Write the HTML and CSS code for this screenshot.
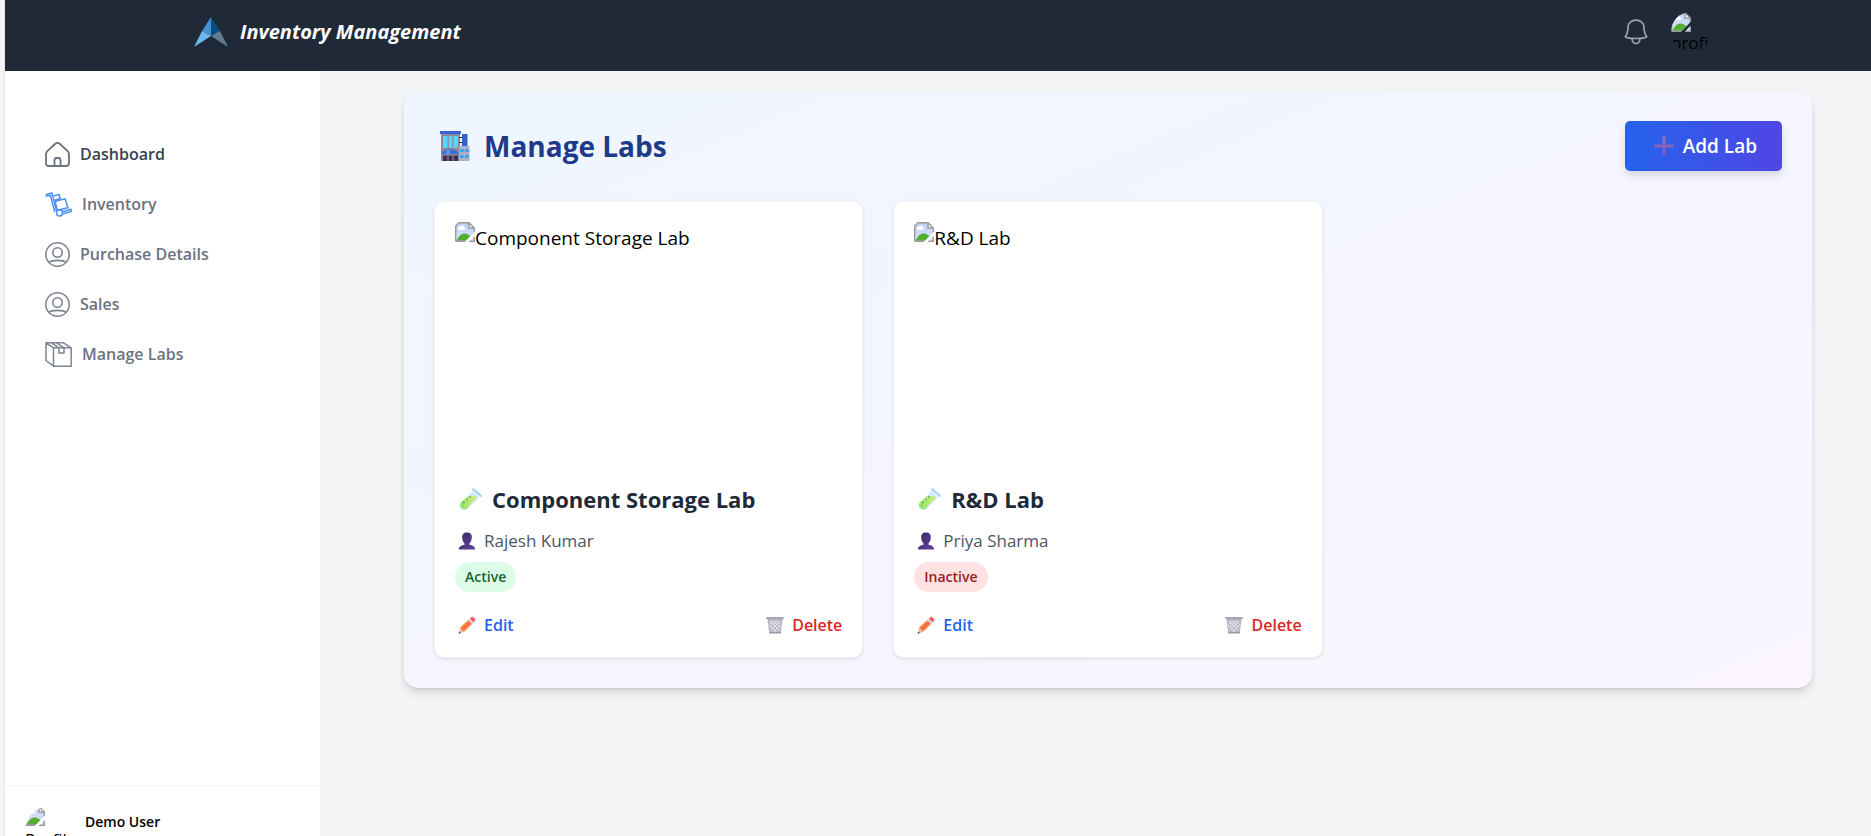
FILE: index.html
```html
<!DOCTYPE html>
<html lang="en">
<head>
<meta charset="utf-8">
<meta name="viewport" content="width=device-width, initial-scale=1">
<title>Inventory Management</title>
<link rel="stylesheet" href="styles.css">
</head>
<body>
<svg class="sprite" aria-hidden="true">
  <defs>
    <linearGradient id="sky" x1="0" y1="0" x2="0" y2="1"><stop offset="0" stop-color="#bdd0f6"/><stop offset="1" stop-color="#dce6fb"/></linearGradient>
    <linearGradient id="liquid" x1="0" y1="1" x2="1" y2="0"><stop offset="0" stop-color="#8fe36b"/><stop offset="1" stop-color="#d3f071"/></linearGradient>
    <linearGradient id="bust" x1="0" y1="0" x2="1" y2="1"><stop offset="0" stop-color="#3c2a63"/><stop offset="1" stop-color="#61419b"/></linearGradient>
    <linearGradient id="cross" x1="0" y1="0" x2="0" y2="1"><stop offset="0" stop-color="#8d7cae"/><stop offset="1" stop-color="#8a4bc0"/></linearGradient>
    <symbol id="broken" viewBox="0 0 20 20">
      <path d="M.7 4L4 .7h10L19.300 6v13.300H.7z" fill="url(#sky)"/>
      <path d="M3.500 8a2 2 0 0 1 1.500-3.500 2.500 2.500 0 0 1 4.500 1A1.500 1.500 0 0 1 9.500 8z" fill="#fff"/>
      <path d="M1.500 18.800C4 13 8 10.500 12 12l3.500 2-4.500 4.800z" fill="#56ad32"/>
      <path d="M14 1v5h5z" fill="#fff"/>
      <path d="M.7 19.300V4L4 .7h10L19.300 6v5M14 .7V6h5.300M.7 19.300H10M14 19.300h5.300V15" fill="none" stroke="#9a9a9a" stroke-width="1.400"/>
      <path d="M20 9.500V13l-6.500 7H10z" class="gap"/>
    </symbol>
    <symbol id="tube" viewBox="0 0 24 24">
      <path d="M14 3.500l7 6.500L9 21.500a4.700 4.700 0 0 1-7-6.500z" fill="#cfe8fb"/>
      <path d="M9.500 8.500h9.500L8.500 21.200a4.600 4.600 0 0 1-6.500-6.400z" fill="url(#liquid)"/>
      <path d="M15 1.500l7.500 6.500" stroke="#a9d5f7" stroke-width="2.600" stroke-linecap="round"/>
      <g fill="#2e9b55"><circle cx="5" cy="15" r=".9"/><circle cx="8.500" cy="12.500" r=".8"/><circle cx="11.500" cy="9.500" r=".9"/><circle cx="4" cy="18" r=".6"/></g>
    </symbol>
    <symbol id="person" viewBox="0 0 18 18">
      <path d="M9 .5c3.500 0 5 2 4.800 5.300C13.500 9.500 12 11 11.500 11.500v1.200c3 .6 5.500 1.800 5.700 4.800H.8c.2-3 2.700-4.200 5.700-4.800v-1.200C6 11 4.500 9.500 4.200 5.800 4 2.500 5.500.5 9 .5z" fill="url(#bust)"/>
    </symbol>
    <symbol id="pencil" viewBox="0 0 18 18">
      <path d="M2 11.500L11.500 3l3.800 3.800L6 16z" fill="#ff8548"/>
      <path d="M3.500 13L13 4.700l1 1L4.500 14.500z" fill="#f2643d"/>
      <path d="M2 11.500L6 16l-5 1.700z" fill="#e9b99a"/><path d="M1.300 15.500L2.800 17l-2.300.8z" fill="#443058"/>
      <path d="M10 4.300l2-1.800L16 6.300l-2 1.900z" fill="#d9cce4"/>
      <path d="M12 2.500L13.500 1c1-.8 4.300 2 3.500 3.600l-1.200 1.700z" fill="#f95a57"/>
    </symbol>
    <symbol id="bin" viewBox="0 0 18 18">
      <path d="M1.500 3h15L14.800 17H3.200z" fill="#b7b2c2"/>
      <path d="M4 5l10 10M7 4.500l7 7M11 4.500l3.500 4M3.500 9l7 7M14 5L4 15M11 4.500l-7 7M7 4.500L3.500 8.500M14.500 9l-7 7" stroke="#f4f2f8" stroke-width=".9"/>
      <path d="M.3 1h17.400v2.300H.3z" fill="#aaa5b2"/><path d="M3 16h12v1.500H3z" fill="#9b96a6"/>
    </symbol>
    <symbol id="user" viewBox="0 0 25 25">
      <g fill="none" stroke="#7d8594" stroke-width="1.600"><circle cx="12.500" cy="12.500" r="11.700"/><circle cx="12.500" cy="10.500" r="4.700"/><path d="M4 20.500c2.500-2.800 14.500-2.800 17 0"/></g>
    </symbol>
  </defs>
</svg>

<div class="app">
  <header class="topbar">
    <a class="brand" href="#">
      <svg class="brand-mark" viewBox="0 0 34 30" aria-hidden="true"><path d="M17 0v19L8 14z" fill="#4791d2"/><path d="M17 0v19l9-5z" fill="#064f86"/><path d="M8 14l9 5L0 30z" fill="#6cb8ea"/><path d="M26 14l-9 5 17 11z" fill="#627d90"/></svg>
      <span>Inventory Management</span>
    </a>
    <div class="tools">
      <button class="bell" type="button" aria-label="Notifications">
        <svg viewBox="0 0 24 26" fill="none" stroke="#9ca3af" stroke-width="1.700" stroke-linejoin="round"><path d="M12 1.200c-4.500 0-8 3-8 7.300 0 5-1 7-2.800 9.200C3 19 7 19.500 12 19.500s9-.5 10.800-1.800C21 15.500 20 13.500 20 8.500c0-4.300-3.500-7.300-8-7.300z"/><path d="M8 19.500c.2 3 1.800 5 4 5s3.800-2 4-5"/></svg>
      </button>
      <a class="avatar avatar-dark" href="#"><svg class="broken"><use href="#broken"/></svg><span>profile</span></a>
    </div>
  </header>

  <div class="body">
    <aside class="sidebar">
      <nav class="nav">
        <a class="current" href="#"><svg viewBox="0 0 25 25" fill="none" stroke="#6b7280" stroke-width="1.800" stroke-linejoin="round"><path d="M1 12.500c0-2 .3-2.500 1.300-3.400L10 2c1.600-1.500 3.400-1.500 5 0l7.700 7.100c1 .9 1.300 1.400 1.300 3.400V21c0 2.200-.8 3-3 3H4c-2.200 0-3-.8-3-3z"/><path d="M9.500 24v-5.500c0-1.500.6-2.500 2-2.500h2c1.400 0 2 1 2 2.500V24"/></svg>Dashboard</a>
        <a href="#"><svg class="wide" viewBox="0 0 27 25" fill="none" stroke="#4b92f5" stroke-width="1.500" stroke-linejoin="round"><path d="M1 2.500L7 1l4.500 18M1 2.500l.3 1.500L5.500 3.500 9.700 20"/><path d="M8.500 4l5.500-1.500 1.300 4-5.700 1.700"/><path d="M10 9.500l10-2.800 3 9-10.500 2.500z"/><circle cx="14.500" cy="21" r="3"/><path d="M17.300 19.700l8.700-2.500.5 2L17.500 22"/></svg>Inventory</a>
        <a href="#"><svg><use href="#user"/></svg>Purchase Details</a>
        <a href="#"><svg><use href="#user"/></svg>Sales</a>
        <a href="#"><svg class="wide" viewBox="0 0 27 25" fill="none" stroke="#7d8594" stroke-width="1.500" stroke-linejoin="round"><path d="M1 .8l7.500 5v18.400L1 18.500zM8.500 5.800h17.700v18.400H8.500zM1 .8h17.500l7.700 5M6.500.8l7.500 5M11.500.8l7.500 5M14 5.800V11h5V5.800"/></svg>Manage Labs</a>
      </nav>
      <div class="account">
        <span class="avatar"><svg class="broken"><use href="#broken"/></svg><span>Profile</span></span>
        <span class="account-name">Demo User</span>
      </div>
    </aside>

    <main class="main">
      <section class="panel">
        <div class="panel-head">
          <h1><svg viewBox="0 0 30 30" aria-hidden="true"><path d="M1 2h19v28H1z" fill="#8c889c"/><path d="M0 0h21v3H0z" fill="#3963d6"/><path d="M3 5h4.500v12H3zM8.800 5h3.400v12H8.800zM13.500 5H18v12h-4.500z" fill="#55d9fb"/><path d="M1.500 23c1-6 16-6 17.500 0z" fill="#3b6fdd"/><path d="M7 19l-1 4h4v-4.300z" fill="#6096ee"/><path d="M3 24.500h15V30H3z" fill="#40304f"/><path d="M8 24v6M13 24v6" stroke="#9a95aa"/><path d="M22 3h5.500v12H22z" fill="#3a60cf"/><path d="M19 6h3v1h-3zM19 11h3v1h-3z" fill="#333"/><path d="M19 15h10.500v15H19z" fill="#b2b0c7"/><path d="M20 18h3.700v3H20zM25 18h3.700v3H25zM20 24h3.700v3H20zM25 24h3.700v3H25z" fill="#37a5f6"/></svg>Manage Labs</h1>
          <button class="add" type="button"><svg viewBox="0 0 20 20" aria-hidden="true"><path d="M8.500.5h3v8h8v3h-8v8h-3v-8h-8v-3h8z" fill="url(#cross)"/></svg>Add Lab</button>
        </div>
        <div class="cards">
          <article class="card">
            <div class="photo"><svg class="broken"><use href="#broken"/></svg><span>Component Storage Lab</span></div>
            <h2><svg><use href="#tube"/></svg>Component Storage Lab</h2>
            <p class="owner"><svg><use href="#person"/></svg>Rajesh Kumar</p>
            <span class="badge active">Active</span>
            <div class="actions">
              <button class="edit" type="button"><svg><use href="#pencil"/></svg>Edit</button>
              <button class="delete" type="button"><svg><use href="#bin"/></svg>Delete</button>
            </div>
          </article>
          <article class="card">
            <div class="photo"><svg class="broken"><use href="#broken"/></svg><span>R&amp;D Lab</span></div>
            <h2><svg><use href="#tube"/></svg>R&amp;D Lab</h2>
            <p class="owner"><svg><use href="#person"/></svg>Priya Sharma</p>
            <span class="badge inactive">Inactive</span>
            <div class="actions">
              <button class="edit" type="button"><svg><use href="#pencil"/></svg>Edit</button>
              <button class="delete" type="button"><svg><use href="#bin"/></svg>Delete</button>
            </div>
          </article>
        </div>
      </section>
    </main>
  </div>
</div>
</body>
</html>
```
FILE: styles.css
```css
* { box-sizing: border-box; }
body {
  margin: 0;
  background: #f5f5f5;
  color: #000;
  font: 19px/32px "Open Sans", "Noto Sans", sans-serif;
}
h1, h2, p { margin: 0; }
a { color: inherit; text-decoration: none; }
button { padding: 0; border: 0; background: none; font: inherit; color: inherit; cursor: pointer; }
svg { flex: none; display: block; }
.sprite { position: absolute; width: 0; height: 0; }
.broken { width: 20px; height: 20px; }
.gap { fill: var(--surface, #fff); }

.app {
  display: flex;
  flex-direction: column;
  height: 100vh;
  margin-left: 4px;
  border-left: 1px solid #e5e5e5;
  overflow: hidden;
}
.topbar {
  flex: none;
  display: flex;
  align-items: center;
  justify-content: space-between;
  height: 71px;
  padding: 0 160px 8px 189px;
  background: #1f2937;
}
.brand {
  display: flex;
  align-items: center;
  gap: 12px;
  color: #fff;
  font-size: 20px;
  font-style: italic;
  font-weight: 700;
}
.brand-mark { width: 34px; height: 30px; }
.tools { display: flex; align-items: center; gap: 23px; }
.bell svg { width: 24px; height: 26px; }
.avatar {
  flex: none;
  display: block;
  width: 50px;
  height: 50px;
  border-radius: 50%;
  overflow: hidden;
}
.avatar span { display: block; font-size: 17px; line-height: 28px; }
.avatar-dark { --surface: #1f2937; width: 40px; height: 40px; }
.avatar-dark span { line-height: 22px; }

.body { flex: 1; display: flex; min-height: 0; }
.sidebar {
  flex: none;
  display: flex;
  flex-direction: column;
  width: 315px;
  height: 100vh;
  background: #fff;
}
.nav { flex: 1; display: flex; flex-direction: column; gap: 18px; padding: 67px 40px; }
.nav a {
  display: flex;
  align-items: center;
  gap: 10px;
  color: #6b7280;
  font-size: 16px;
  font-weight: 600;
}
.nav .current { color: #374151; }
.nav svg { width: 25px; height: 25px; }
.nav .wide { width: 27px; }
.account {
  display: flex;
  gap: 10px;
  min-height: 122px;
  padding: 20px;
  border-top: 1px solid #f3f4f6;
}
.account-name { font-size: 14px; font-weight: 600; }

.main { flex: 1; padding: 20px 59px 20px 84px; background: #f3f4f6; }
.panel {
  padding: 30px;
  border-radius: 15px;
  background: linear-gradient(to bottom right, #eff6ff, #faf5ff);
  box-shadow: 0 5px 8px -1px rgba(0, 0, 0, .14), 0 2px 4px -2px rgba(0, 0, 0, .1);
}
.panel-head { display: flex; align-items: center; justify-content: space-between; margin-bottom: 30px; }
.panel-head h1 {
  display: flex;
  align-items: center;
  gap: 14px;
  padding-left: 6px;
  color: #1e3a8a;
  font-size: 28px;
  line-height: 40px;
}
.panel-head h1 svg { width: 30px; height: 30px; }
.add {
  display: flex;
  align-items: center;
  gap: 9px;
  padding: 9px 25px 9px 29px;
  border-radius: 5px;
  background: linear-gradient(to right, #2563eb, #4f46e5);
  box-shadow: 0 5px 8px -1px rgba(0, 0, 0, .14);
  color: #fff;
  font-weight: 600;
}
.add svg { width: 20px; height: 20px; }

.cards { display: grid; grid-template-columns: repeat(3, minmax(0, 1fr)); gap: 30px; }
.card {
  padding: 20px 20px 18px;
  border: 1px solid #f3f4f6;
  border-radius: 10px;
  background: #fff;
  box-shadow: 0 1px 3px rgba(0, 0, 0, .12);
}
.photo { display: flex; align-items: flex-start; height: 240px; margin-bottom: 18px; }
.card h2 {
  display: flex;
  align-items: center;
  gap: 10px;
  margin-bottom: 7px;
  padding-left: 4px;
  color: #1f2937;
  font-size: 22px;
  line-height: 38px;
}
.card h2 svg { width: 23px; height: 23px; }
.owner {
  display: flex;
  align-items: center;
  gap: 8px;
  margin-bottom: 5px;
  padding-left: 3px;
  color: #4b5563;
  font-size: 17px;
}
.owner svg, .actions svg { width: 18px; height: 18px; }
.badge {
  display: inline-block;
  padding: 0 10px;
  border-radius: 15px;
  font-size: 14px;
  font-weight: 600;
  line-height: 30px;
  vertical-align: top;
}
.active { background: #dcfce7; color: #166534; }
.inactive { background: #fee2e2; color: #991b1b; }
.actions {
  display: flex;
  justify-content: space-between;
  margin-top: 17px;
  font-size: 16px;
  font-weight: 600;
  line-height: 28px;
}
.actions button { display: flex; align-items: center; gap: 8px; padding-left: 3px; }
.edit { color: #2563eb; }
.delete { color: #dc2626; }
```
